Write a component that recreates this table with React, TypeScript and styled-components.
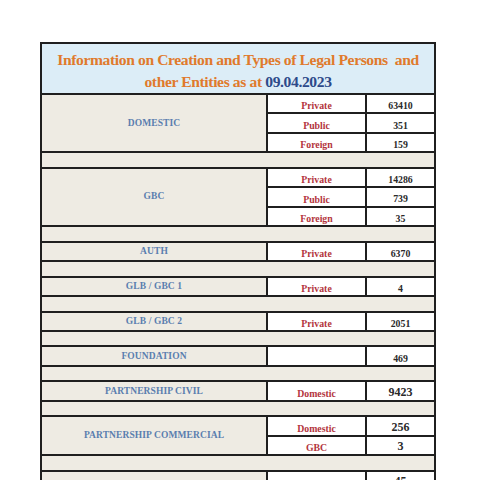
import React from "react"
import styled, { createGlobalStyle } from "styled-components"

const colors = {
  line: "#1f1f1f",
  headerBg: "#dcedf7",
  beige: "#eeebe3",
  title: "#e07a2c",
  date: "#2d4a8a",
  label: "#5a7eaf",
  kind: "#b3353d",
  value: "#2a2a2a",
}

const GlobalStyle = createGlobalStyle`
  html, body {
    margin: 0;
    padding: 0;
    background: #ffffff;
  }
  body {
    font-family: "Liberation Serif", "Times New Roman", serif;
  }
`

const Page = styled.div`
  padding: 42px 0 0 40px;
`

const Sheet = styled.div`
  display: grid;
  grid-template-columns: 224px 97px 67px;
  gap: 2px;
  padding: 2px;
  width: fit-content;
  background: ${colors.line};
  font-weight: 700;
`

const Header = styled.div`
  grid-column: 1 / span 3;
  height: 49px;
  background: ${colors.headerBg};
  display: flex;
  align-items: center;
  justify-content: center;
  padding-top: 4px;
  box-sizing: border-box;
  text-align: center;
  font-size: 15.6px;
  font-weight: 700;
  line-height: 22px;
  letter-spacing: -0.38px;
  white-space: nowrap;
  color: ${colors.title};
`

const DateText = styled.span`
  color: ${colors.date};
`

const Label = styled.div<{ rows: number }>`
  grid-row: span ${(p) => p.rows};
  background: ${colors.beige};
  color: ${colors.label};
  font-size: 9.5px;
  font-weight: 700;
  display: flex;
  align-items: center;
  justify-content: center;
  padding-bottom: 1px;
  box-sizing: border-box;
  letter-spacing: 0.1px;
`

const Kind = styled.div`
  height: 17.4px;
  background: #ffffff;
  color: ${colors.kind};
  font-size: 9.8px;
  font-weight: 700;
  display: flex;
  align-items: flex-end;
  justify-content: center;
  line-height: 12px;
  box-sizing: border-box;
`

const Value = styled.div<{ big?: boolean }>`
  height: 17.4px;
  background: #ffffff;
  color: ${colors.value};
  font-size: ${(p) => (p.big ? "12px" : "9.8px")};
  font-weight: 700;
  display: flex;
  align-items: center;
  justify-content: center;
  padding-top: ${(p) => (p.big ? "2px" : "4px")};
  box-sizing: border-box;
`

const Spacer = styled.div`
  grid-column: 1 / span 3;
  height: 13.6px;
  background: ${colors.beige};
`

type Line = { kind: string; value: string }
type Group = { name: string; lines: Line[]; big?: boolean }

const groups: Group[] = [
  {
    name: "DOMESTIC",
    lines: [
      { kind: "Private", value: "63410" },
      { kind: "Public", value: "351" },
      { kind: "Foreign", value: "159" },
    ],
  },
  {
    name: "GBC",
    lines: [
      { kind: "Private", value: "14286" },
      { kind: "Public", value: "739" },
      { kind: "Foreign", value: "35" },
    ],
  },
  { name: "AUTH", lines: [{ kind: "Private", value: "6370" }] },
  { name: "GLB / GBC 1", lines: [{ kind: "Private", value: "4" }] },
  { name: "GLB / GBC 2", lines: [{ kind: "Private", value: "2051" }] },
  { name: "FOUNDATION", lines: [{ kind: "", value: "469" }] },
  {
    name: "PARTNERSHIP CIVIL",
    lines: [{ kind: "Domestic", value: "9423" }],
    big: true,
  },
  {
    name: "PARTNERSHIP COMMERCIAL",
    lines: [
      { kind: "Domestic", value: "256" },
      { kind: "GBC", value: "3" },
    ],
    big: true,
  },
  {
    name: "LIMITED PARTNERSHIP",
    lines: [
      { kind: "", value: "45" },
      { kind: "Domestic", value: "12" },
      { kind: "GBC", value: "2" },
    ],
    big: true,
  },
]

export default function App() {
  return (
    <Page>
      <GlobalStyle />
      <Sheet>
        <Header>
          <div>
            Information on Creation and Types of Legal Persons&nbsp; and
            <br />
            other Entities as at <DateText>09.04.2023</DateText>
          </div>
        </Header>
        {groups.map((g, gi) => (
          <React.Fragment key={g.name}>
            {gi > 0 && <Spacer />}
            {g.lines.map((l, i) => (
              <React.Fragment key={i}>
                {i === 0 && <Label rows={g.lines.length}>{g.name}</Label>}
                <Kind>{l.kind}</Kind>
                <Value big={g.big}>{l.value}</Value>
              </React.Fragment>
            ))}
          </React.Fragment>
        ))}
      </Sheet>
    </Page>
  )
}
